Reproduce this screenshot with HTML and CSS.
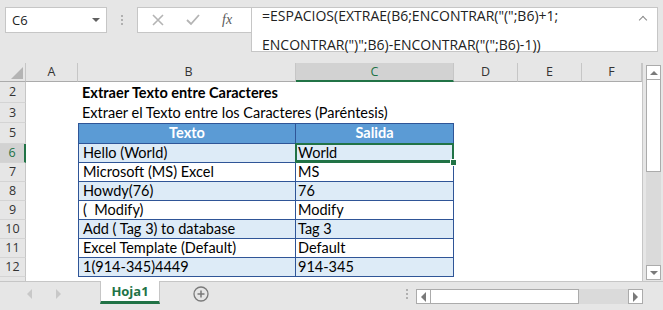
FILE: index.html
```html
<!DOCTYPE html>
<html lang="es">
<head>
    <meta charset="UTF-8">
    <title>Hoja1</title>
    <link rel="stylesheet" href="styles.css">
</head>
<body>
    <div class="app">
        <div class="fbar">
            <div class="namebox">
                <span>C6</span>
                <span class="caret"></span>
            </div>
            <div class="grip"><i></i><i></i><i></i></div>
            <div class="fxbox">
                <svg width="14" height="14" viewBox="0 0 14 14"><path d="M2 2 L12 12 M12 2 L2 12" stroke="#b4b4b4" stroke-width="1.6" fill="none"/></svg>
                <svg width="16" height="14" viewBox="0 0 16 14"><path d="M2 7 L6 11 L14 2" stroke="#b4b4b4" stroke-width="1.8" fill="none"/></svg>
                <span class="fx">fx</span>
            </div>
            <div class="formula">
                <div>=ESPACIOS(EXTRAE(B6;ENCONTRAR("(";B6)+1;</div>
                <div>ENCONTRAR(")";B6)-ENCONTRAR("(";B6)-1))</div>
                <span class="up"></span>
            </div>
        </div>

        <div class="main">
            <div class="sheet">
                <div class="row hdr">
                    <div class="rh corner"><span></span></div>
                    <div class="ca">A</div>
                    <div class="cb">B</div>
                    <div class="cc sel">C</div>
                    <div class="cd">D</div>
                    <div class="ce">E</div>
                    <div class="cf">F</div>
                </div>
                <div class="row r21">
                    <div class="rh">2</div>
                    <div class="ca"></div>
                    <div class="cb title">Extraer Texto entre Caracteres</div>
                    <div class="cc"></div>
                </div>
                <div class="row r20">
                    <div class="rh">3</div>
                    <div class="ca"></div>
                    <div class="cb wide">Extraer el Texto entre los Caracteres (Paréntesis)</div>
                </div>
                <div class="row r21">
                    <div class="rh">5</div>
                    <div class="ca"></div>
                    <div class="cb t th">Texto</div>
                    <div class="cc t th">Salida</div>
                </div>
                <div class="row">
                    <div class="rh sel">6</div>
                    <div class="ca"></div>
                    <div class="cb t alt">Hello (World)</div>
                    <div class="cc t alt active">World<span class="handle"></span></div>
                </div>
                <div class="row">
                    <div class="rh">7</div>
                    <div class="ca"></div>
                    <div class="cb t">Microsoft (MS) Excel</div>
                    <div class="cc t">MS</div>
                </div>
                <div class="row">
                    <div class="rh">8</div>
                    <div class="ca"></div>
                    <div class="cb t alt">Howdy(76)</div>
                    <div class="cc t alt">76</div>
                </div>
                <div class="row">
                    <div class="rh">9</div>
                    <div class="ca"></div>
                    <div class="cb t">(&nbsp; Modify)</div>
                    <div class="cc t">Modify</div>
                </div>
                <div class="row">
                    <div class="rh">10</div>
                    <div class="ca"></div>
                    <div class="cb t alt">Add ( Tag 3) to database</div>
                    <div class="cc t alt">Tag 3</div>
                </div>
                <div class="row">
                    <div class="rh">11</div>
                    <div class="ca"></div>
                    <div class="cb t">Excel Template (Default)</div>
                    <div class="cc t">Default</div>
                </div>
                <div class="row">
                    <div class="rh">12</div>
                    <div class="ca"></div>
                    <div class="cb t alt">1(914-345)4449</div>
                    <div class="cc t alt">914-345</div>
                </div>
                <div class="row">
                    <div class="rh"></div>
                </div>
            </div>
            <div class="vscroll">
                <div class="sbtn"><span class="tri-up"></span></div>
                <div class="vthumb"></div>
                <div class="vtrack"></div>
                <div class="sbtn"><span class="tri-down"></span></div>
            </div>
        </div>

        <div class="tabs">
            <div class="nav">
                <span class="tri-left"></span>
                <span class="tri-right"></span>
            </div>
            <div class="tab">Hoja1</div>
            <div class="plus">
                <svg width="16" height="16" viewBox="0 0 16 16"><circle cx="8" cy="8" r="7" stroke="#7a7a7a" stroke-width="1.3" fill="none"/><path d="M8 4.5 V11.5 M4.5 8 H11.5" stroke="#7a7a7a" stroke-width="1.5"/></svg>
            </div>
            <div class="grip hgrip"><i></i><i></i><i></i></div>
            <div class="hscroll">
                <div class="sbtn"><span class="tri-left dark"></span></div>
                <div class="hthumb"></div>
                <div class="htrack"></div>
                <div class="sbtn"><span class="tri-right dark"></span></div>
            </div>
        </div>
    </div>
</body>
</html>
```

FILE: styles.css
```css
body{
    margin: 0;
    background: #e6e6e6;
}

.app{
    width: 663px;
    height: 310px;
    overflow: hidden;
    background: #e6e6e6;
    font-family: "Open Sans", "Noto Sans", sans-serif;
}

/* formula bar */
.fbar{
    height: 63px;
    display: flex;
    align-items: flex-start;
    padding: 7px 0 0 5px;
    box-sizing: border-box;
}

.namebox{
    width: 102px;
    height: 26px;
    box-sizing: border-box;
    border: 1px solid #c6c6c6;
    background: #fff;
    display: flex;
    align-items: center;
    justify-content: space-between;
    padding: 0 6px 0 6px;
    font-size: 13px;
    color: #222;
}

.caret{
    width: 0;
    height: 0;
    border-left: 4px solid transparent;
    border-right: 4px solid transparent;
    border-top: 4px solid #606060;
}

.grip{
    width: 30px;
    height: 26px;
    display: flex;
    flex-direction: column;
    align-items: center;
    justify-content: center;
    gap: 2px;
}

.grip i{
    width: 2px;
    height: 2px;
    background: #b0b0b0;
}

.fxbox{
    width: 114px;
    height: 26px;
    box-sizing: border-box;
    border: 1px solid #c6c6c6;
    border-right: none;
    background: #fff;
    display: flex;
    align-items: center;
    padding-left: 13px;
    gap: 20px;
}

.fx{
    font-family: "Liberation Serif", serif;
    font-style: italic;
    font-size: 14px;
    color: #595959;
    margin-left: 1px;
}

.formula{
    position: relative;
    width: 407px;
    height: 45px;
    box-sizing: border-box;
    border: 1px solid #c6c6c6;
    background: #fff;
    padding: 0 0 0 10px;
    font-size: 14px;
    line-height: 16px;
    color: #222;
}

.formula div{
    height: 16px;
    white-space: nowrap;
}

.formula div:first-child{
    margin-bottom: 13px;
}

.up{
    position: absolute;
    right: 11px;
    top: 9px;
    width: 5px;
    height: 5px;
    border-left: 1.5px solid #8a8a8a;
    border-top: 1.5px solid #8a8a8a;
    transform: rotate(45deg);
}

/* grid */
.main{
    display: flex;
    height: 218px;
}

.sheet{
    width: 643px;
    height: 218px;
    overflow: hidden;
    background: #fff;
    border-right: 1px solid #c6c6c6;
    box-sizing: border-box;
    font-family: "Lato", "Noto Sans", sans-serif;
    font-size: 14.5px;
    color: #000;
}

.row{
    display: flex;
    height: 19px;
}

.r21{
    height: 21px;
}

.r20{
    height: 20px;
}

.row > div{
    box-sizing: border-box;
    flex: none;
    white-space: nowrap;
    line-height: 18px;
}

.rh{
    width: 26px;
    background: #e6e6e6;
    border-right: 1px solid #c6c6c6;
    border-bottom: 1px solid #d4d4d4;
    text-align: center;
    font-family: "Open Sans", sans-serif;
    font-size: 12.5px;
    color: #333;
}

.r21 .rh,
.r20 .rh{
    line-height: 20px;
}

.rh.sel{
    background: #d2d2d2;
    border-right: 2px solid #217346;
    color: #217346;
}

.corner{
    position: relative;
}

.corner span{
    position: absolute;
    right: 2px;
    bottom: 2px;
    width: 0;
    height: 0;
    border-left: 12px solid transparent;
    border-bottom: 12px solid #b4b4b4;
}

.ca{ width: 52px; }
.cb{ width: 218px; }
.cc{ width: 158px; }
.cd{ width: 64px; }
.ce{ width: 64px; }
.cf{ width: 60px; }

.hdr > div{
    background: #e6e6e6;
    border-right: 1px solid #c6c6c6;
    border-bottom: 1px solid #ababab;
    text-align: center;
    font-family: "Open Sans", sans-serif;
    font-size: 12.5px;
    color: #333;
}

.hdr > .rh{
    border-bottom: 1px solid #ababab;
}

.hdr > .cc.sel{
    background: #d2d2d2;
    border-bottom: 2px solid #217346;
    color: #217346;
}

.cb{
    padding-left: 4px;
}

.title{
    font-weight: bold;
    line-height: 22px !important;
}

.r20 .cb{
    line-height: 20px;
}

.wide{
    overflow: visible;
}

.t{
    border-right: 1px solid #2f5597;
    border-bottom: 1px solid #2f5597;
    padding-left: 4px;
}

.cb.t{
    border-left: 1px solid #2f5597;
}

.cc.t{
    padding-left: 2px;
}

.th{
    background: #5b9bd5;
    color: #fff;
    font-weight: bold;
    text-align: center;
    border-top: 1px solid #2f5597;
    padding-left: 0 !important;
}

.alt{
    background: #ddebf7;
}

.active{
    position: relative;
}

.active::after{
    content: "";
    position: absolute;
    left: -1px;
    top: -1px;
    right: -1px;
    bottom: -1px;
    border: 2px solid #217346;
    border-bottom-width: 3px;
}

.handle{
    position: absolute;
    right: -4px;
    bottom: -4px;
    width: 5px;
    height: 5px;
    background: #217346;
    border: 1px solid #fff;
    z-index: 2;
}

/* scrollbars */
.vscroll{
    width: 15px;
    margin: 2px 0 1px 3px;
    display: flex;
    flex-direction: column;
    background: #dadada;
}

.sbtn{
    width: 15px;
    height: 15px;
    box-sizing: border-box;
    border: 1px solid #ababab;
    background: #fff;
    display: flex;
    align-items: center;
    justify-content: center;
    flex: none;
}

.vthumb{
    height: 92px;
    background: #fff;
    border: 1px solid #ababab;
    border-top: none;
    box-sizing: border-box;
}

.vtrack{
    flex: 1;
}

.tri-up,
.tri-down,
.tri-left,
.tri-right{
    width: 0;
    height: 0;
}

.tri-up{
    border-left: 4px solid transparent;
    border-right: 4px solid transparent;
    border-bottom: 4px solid #7a7a7a;
}

.tri-down{
    border-left: 4px solid transparent;
    border-right: 4px solid transparent;
    border-top: 4px solid #7a7a7a;
}

.tri-left{
    border-top: 5px solid transparent;
    border-bottom: 5px solid transparent;
    border-right: 5px solid #c8c8c8;
}

.tri-right{
    border-top: 5px solid transparent;
    border-bottom: 5px solid transparent;
    border-left: 5px solid #c8c8c8;
}

.tri-left.dark{
    border-right-color: #7a7a7a;
}

.tri-right.dark{
    border-left-color: #7a7a7a;
}

/* sheet tabs */
.tabs{
    height: 29px;
    display: flex;
    align-items: flex-start;
    border-top: 1px solid #c6c6c6;
    box-sizing: border-box;
}

.nav{
    width: 100px;
    height: 24px;
    display: flex;
    align-items: center;
    gap: 24px;
    padding-left: 27px;
    box-sizing: border-box;
}

.tab{
    width: 60px;
    height: 23px;
    box-sizing: border-box;
    background: #fff;
    border-left: 1px solid #c6c6c6;
    border-right: 1px solid #c6c6c6;
    border-bottom: 3px solid #217346;
    margin-top: -1px;
    text-align: center;
    font-family: "Open Sans", sans-serif;
    font-weight: bold;
    font-size: 13px;
    line-height: 21px;
    color: #217346;
}

.plus{
    width: 60px;
    height: 24px;
    display: flex;
    align-items: center;
    justify-content: center;
    padding-left: 22px;
    box-sizing: border-box;
}

.hgrip{
    width: 16px;
    height: 24px;
    margin-left: 179px;
}

.hscroll{
    width: 227px;
    height: 15px;
    margin-top: 7px;
    margin-left: 1px;
    display: flex;
    background: #dadada;
}

.hthumb{
    width: 148px;
    background: #fff;
    border: 1px solid #ababab;
    border-left: none;
    box-sizing: border-box;
}

.htrack{
    flex: 1;
}
```
